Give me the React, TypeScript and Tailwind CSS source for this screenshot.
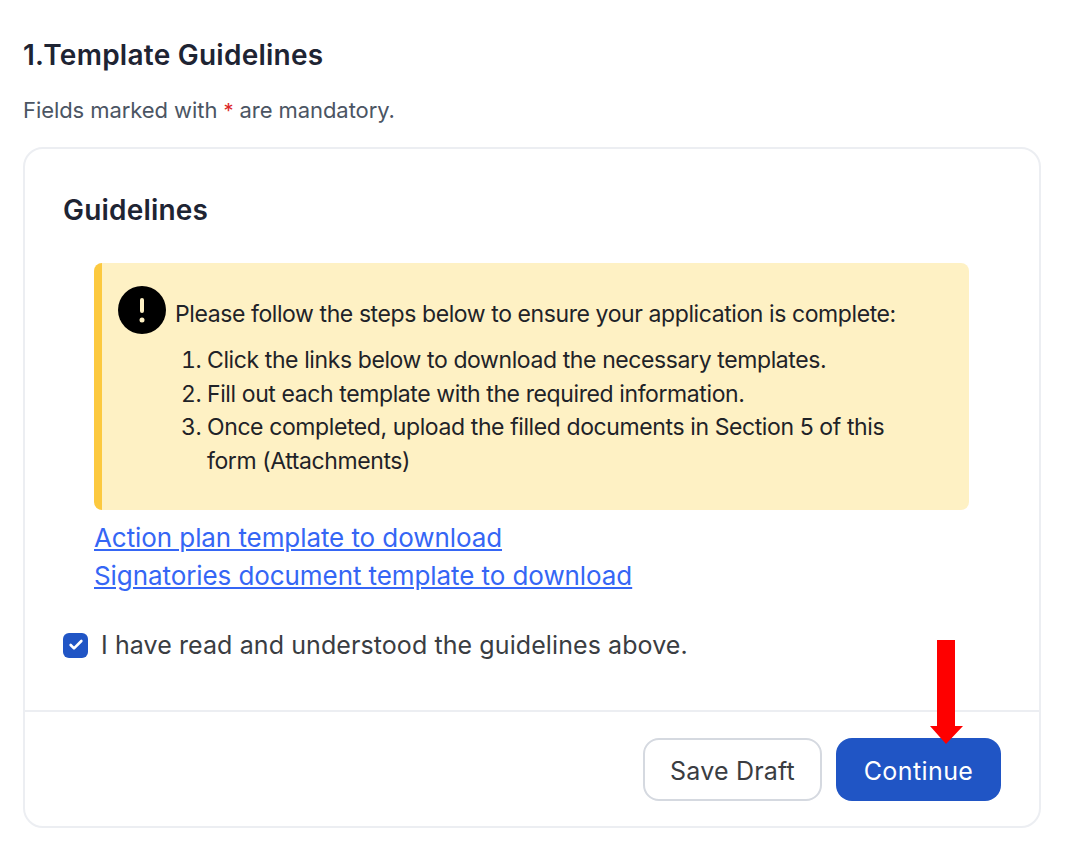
import React from 'react';
import { Check } from 'lucide-react';

const font = "font-['Inter','Noto_Sans',sans-serif]";

const steps = [
  'Click the links below to download the necessary templates.',
  'Fill out each template with the required information.',
  'Once completed, upload the filled documents in Section 5 of this form (Attachments)',
];

const App: React.FC = () => {
  return (
    <div className={`relative w-[1070px] h-[842px] overflow-hidden bg-white px-[23px] pt-[37px] ${font}`}>
      <h1 className="h-[36px] text-[28px] leading-[36px] font-semibold tracking-[0.25px] text-[#1e2433]">1.Template Guidelines</h1>
      <p className="mt-[23px] h-[28px] text-[22px] leading-[28px] tracking-[-0.07px] text-[#4b5563]">
        Fields marked with <span className="text-[20px] text-[#dc2626]">*</span> are mandatory.
      </p>

      {/* Card */}
      <div className="mt-[23px] w-[1018px] h-[681px] rounded-[20px] border-2 border-[#eceef2] bg-white">
        <div className="h-[561px] pl-[38px] pt-[43px]">
          <h2 className="h-[36px] text-[28px] leading-[36px] font-semibold tracking-[0.2px] text-[#1e2433]">Guidelines</h2>

          <div className="mt-[35px] ml-[31px] w-[875px] h-[247px] rounded-[8px] border-l-[8px] border-[#fcc93f] bg-[#fef1c4] pl-[16px] pt-[23px]">
            <div className="flex items-center gap-[10px]">
              <div className="flex h-[48px] w-[48px] shrink-0 items-center justify-center rounded-full bg-black">
                <svg width="8" height="32" viewBox="0 0 8 32">
                  <rect x="2" y="4" width="4" height="15" rx="2" fill="#fef1c4" />
                  <circle cx="4" cy="26" r="2.5" fill="#fef1c4" />
                </svg>
              </div>
              <span className="mt-[8px] -ml-[1px] text-[23px] leading-[30px] tracking-[-0.41px] text-[#1f2328]">Please follow the steps below to ensure your application is complete:</span>
            </div>
            <ol className="mt-[10px] w-[789px] list-decimal pl-[89px] text-[23px] leading-[33.5px] tracking-[-0.4px] text-[#1f2328]">
              {steps.map((step) => (
                <li key={step}>{step}</li>
              ))}
            </ol>
          </div>

          <div className="ml-[31px] mt-[9px] flex flex-col items-start text-[26px] leading-[38px] tracking-[-0.08px] text-[#3566f5]">
            <a className="underline">Action plan template to download</a>
            <a className="underline">Signatories document template to download</a>
          </div>

          <label className="mt-[33px] flex items-center gap-[13px]">
            <span className="flex h-[25px] w-[25px] items-center justify-center rounded-[6px] bg-[#2055c5]">
              <Check className="h-[16px] w-[16px] text-white" strokeWidth={4} />
            </span>
            <span className="text-[25px] leading-[34px] tracking-[0.09px] text-[#3a3d42]">I have read and understood the guidelines above.</span>
          </label>
        </div>

        {/* Footer */}
        <div className="flex h-[116px] justify-end gap-[14px] border-t-2 border-[#eceef2] pt-[26px] pr-[38px]">
          <button className="h-[63px] w-[179px] rounded-[16px] border-2 border-[#d5d9e0] bg-white pt-[4px] text-[25px] tracking-[0.2px] text-[#3a3d42]">Save Draft</button>
          <button className="h-[63px] w-[165px] rounded-[16px] bg-[#2055c5] pt-[4px] text-[25px] tracking-[0.4px] text-white">Continue</button>
        </div>
      </div>

      {/* Red annotation arrow */}
      <svg className="absolute left-[928px] top-[638px]" width="36" height="108" viewBox="0 0 36 108">
        <path d="M9 2H27V88H35L18 106L2 88H9Z" fill="#fe0000" />
      </svg>
    </div>
  );
};

export default App;
